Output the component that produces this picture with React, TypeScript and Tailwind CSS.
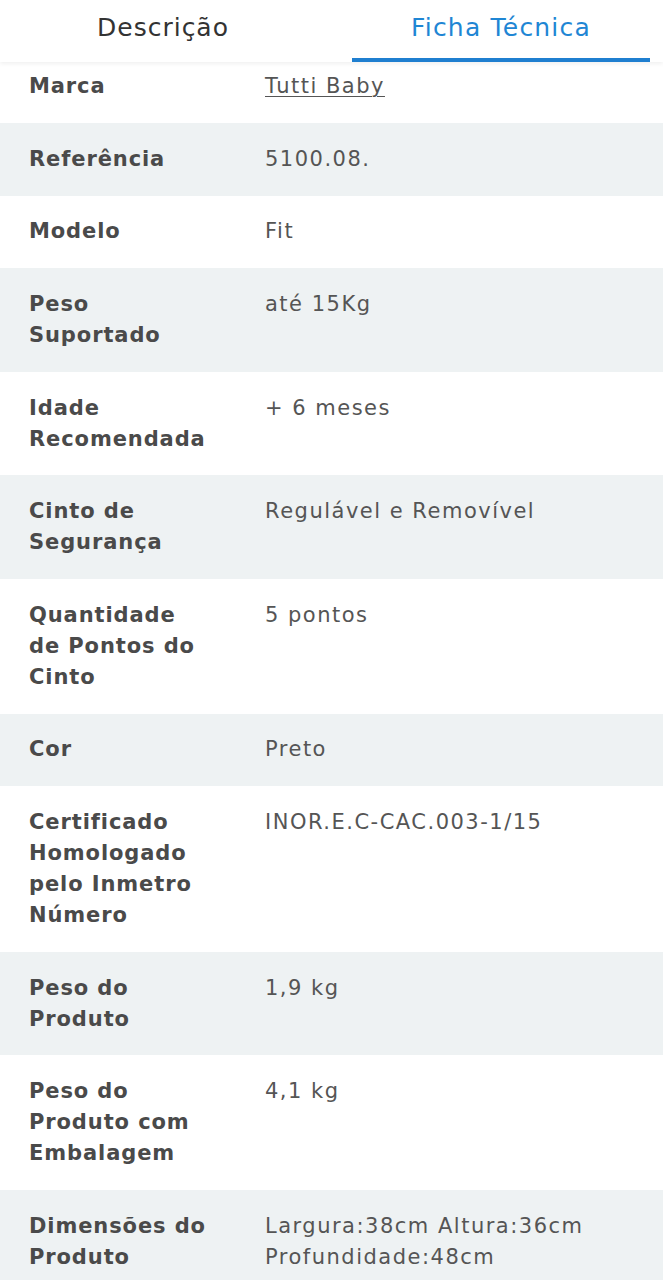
import React from "react";

const rows: { label: string[]; value: string[]; link?: boolean }[] = [
  { label: ["Marca"], value: ["Tutti Baby"], link: true },
  { label: ["Referência"], value: ["5100.08."] },
  { label: ["Modelo"], value: ["Fit"] },
  { label: ["Peso", "Suportado"], value: ["até 15Kg"] },
  { label: ["Idade", "Recomendada"], value: ["+ 6 meses"] },
  { label: ["Cinto de", "Segurança"], value: ["Regulável e Removível"] },
  { label: ["Quantidade", "de Pontos do", "Cinto"], value: ["5 pontos"] },
  { label: ["Cor"], value: ["Preto"] },
  { label: ["Certificado", "Homologado", "pelo Inmetro", "Número"], value: ["INOR.E.C-CAC.003-1/15"] },
  { label: ["Peso do", "Produto"], value: ["1,9 kg"] },
  { label: ["Peso do", "Produto com", "Embalagem"], value: ["4,1 kg"] },
  { label: ["Dimensões do", "Produto"], value: ["Largura:38cm Altura:36cm", "Profundidade:48cm"] },
];

export default function App() {
  return (
    <div
      className="w-[663px] h-[1280px] overflow-hidden bg-white"
      style={{ fontFamily: '"DejaVu Sans", "Noto Sans", sans-serif' }}
    >
      <div className="relative z-10 flex h-[62px] bg-white shadow-[0_2px_4px_rgba(0,0,0,0.06)]">
        <div className="flex w-[326px] items-center justify-center pb-[6px] text-[25px] tracking-[1px] text-[#333333]">
          Descrição
        </div>
        <div className="relative ml-[26px] flex w-[298px] items-center justify-center pb-[6px] text-[25px] tracking-[1.2px] text-[#1f86d4]">
          Ficha Técnica
          <div className="absolute bottom-0 left-0 right-0 h-[4px] bg-[#1f7fd0]" />
        </div>
      </div>
      <div>
        {rows.map((r, i) => (
          <div
            key={i}
            className={`flex ${i % 2 === 1 ? "bg-[#eef2f3]" : "bg-white"} ${
              i === 0 ? "pt-[9px] pb-[21px]" : "py-[20.8px]"
            } text-[21px] leading-[31px]`}
          >
            <div className="w-[265px] pl-[29px] font-bold tracking-[0.9px] text-[#4a4a4a]">
              {r.label.map((l, j) => (
                <div key={j}>{l}</div>
              ))}
            </div>
            <div className="flex-1 tracking-[1.5px] text-[#555555]">
              {r.value.map((v, j) => (
                <div key={j} className={r.link ? "underline decoration-1 underline-offset-[3px]" : ""}>
                  {v}
                </div>
              ))}
            </div>
          </div>
        ))}
      </div>
    </div>
  );
}
